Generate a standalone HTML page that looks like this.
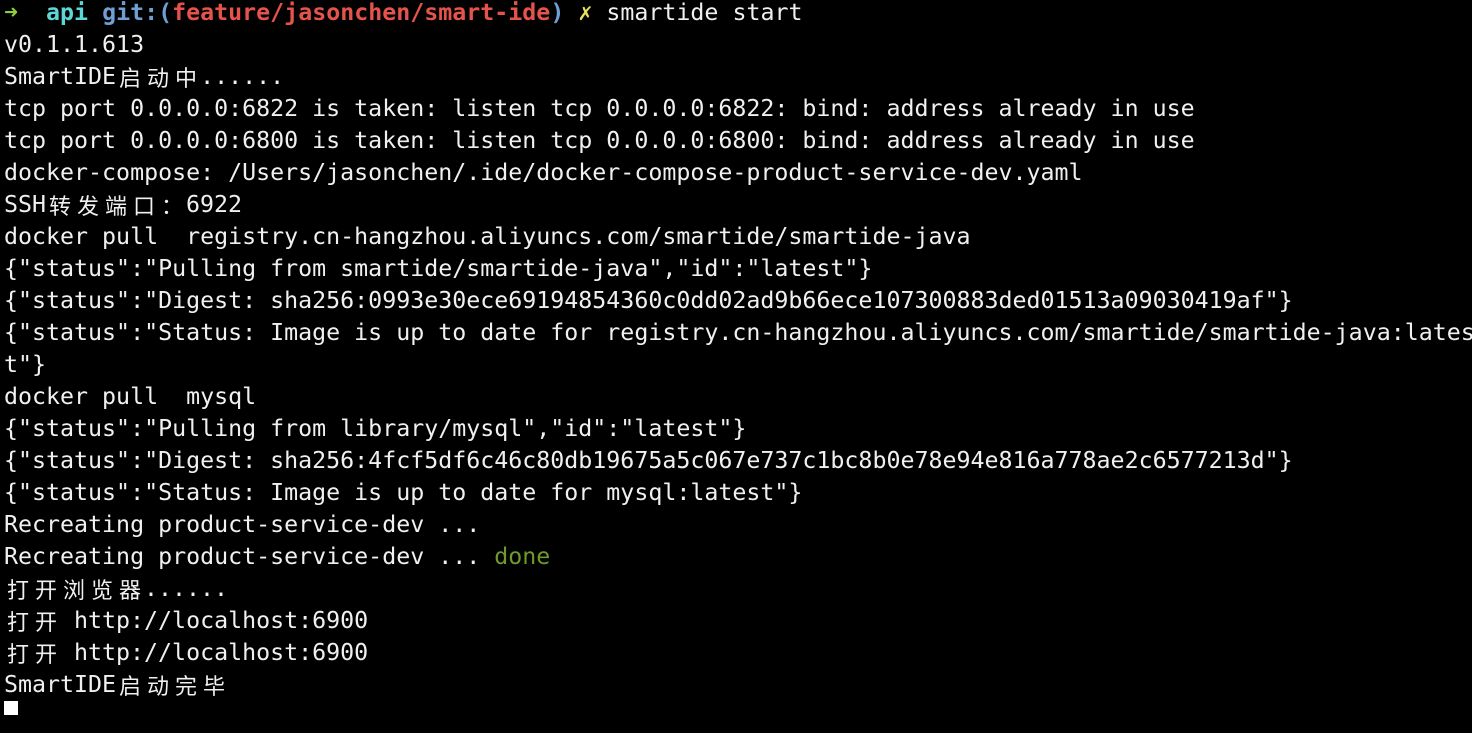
<!DOCTYPE html>
<html><head><meta charset="utf-8"><style>
html,body{margin:0;background:#000;width:1472px;height:710px;overflow:hidden}
.t{position:absolute;left:4px;top:-3px;font-family:"DejaVu Sans Mono","Liberation Mono","Noto Sans CJK SC",monospace;font-size:23.27px;color:#f0f0f0}
.t div{height:32px;line-height:32px;overflow:visible;white-space:pre}
.c{display:inline-block;width:28px;height:32px;line-height:32px;text-align:center;font-family:"Noto Sans CJK SC",sans-serif;font-size:22px;vertical-align:top}
b{font-weight:bold}
.cur{display:inline-block;width:14px;height:14px;background:#fff;vertical-align:top;margin-top:0px}
</style></head><body><div class="t"><div><span style="color:#8fcf3a">➜</span>  <b style="color:#5cd6d6">api</b> <b style="color:#6f9fd4">git:(</b><b style="color:#e5534b">feature/jasonchen/smart-ide</b><b style="color:#6f9fd4">)</b> <span style="color:#e6e25a">✗</span> smartide start</div><div>v0.1.1.613</div><div>SmartIDE<span class="c">启</span><span class="c">动</span><span class="c">中</span>......</div><div>tcp port 0.0.0.0:6822 is taken: listen tcp 0.0.0.0:6822: bind: address already in use</div><div>tcp port 0.0.0.0:6800 is taken: listen tcp 0.0.0.0:6800: bind: address already in use</div><div>docker-compose: /Users/jasonchen/.ide/docker-compose-product-service-dev.yaml</div><div>SSH<span class="c">转</span><span class="c">发</span><span class="c">端</span><span class="c">口</span><span class="c">：</span>6922</div><div>docker pull  registry.cn-hangzhou.aliyuncs.com/smartide/smartide-java</div><div>{"status":"Pulling from smartide/smartide-java","id":"latest"}</div><div>{"status":"Digest: sha256:0993e30ece69194854360c0dd02ad9b66ece107300883ded01513a09030419af"}</div><div>{"status":"Status: Image is up to date for registry.cn-hangzhou.aliyuncs.com/smartide/smartide-java:lates</div><div>t"}</div><div>docker pull  mysql</div><div>{"status":"Pulling from library/mysql","id":"latest"}</div><div>{"status":"Digest: sha256:4fcf5df6c46c80db19675a5c067e737c1bc8b0e78e94e816a778ae2c6577213d"}</div><div>{"status":"Status: Image is up to date for mysql:latest"}</div><div>Recreating product-service-dev ...</div><div>Recreating product-service-dev ... <span style="color:#6f9a2a">done</span></div><div><span class="c">打</span><span class="c">开</span><span class="c">浏</span><span class="c">览</span><span class="c">器</span>......</div><div><span class="c">打</span><span class="c">开</span> http://localhost:6900</div><div><span class="c">打</span><span class="c">开</span> http://localhost:6900</div><div>SmartIDE<span class="c">启</span><span class="c">动</span><span class="c">完</span><span class="c">毕</span></div><div><span class="cur"></span></div></div></body></html>
